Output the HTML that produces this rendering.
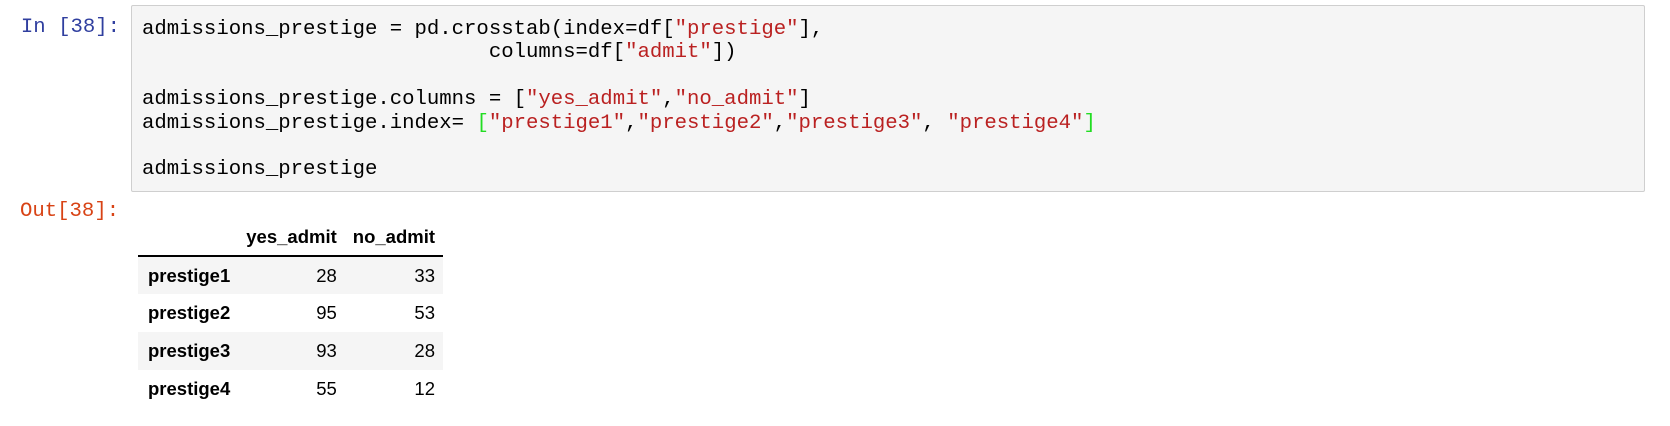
<!DOCTYPE html>
<html><head><style>
body{margin:0;width:1670px;height:426px;background:#fff;position:relative;overflow:hidden}
.p{position:absolute;font-family:"Liberation Mono",monospace;font-size:20.65px}
.in{color:#303f9f;right:1550px;top:16px}
.out{color:#d84315;left:20px;top:200px}
.box{position:absolute;left:131px;top:5px;width:1514px;height:187px;background:#f5f5f5;border:1px solid #cfcfcf;border-radius:2px;box-sizing:border-box}
pre{margin:0;position:absolute;left:10px;top:12px;font-family:"Liberation Mono",monospace;font-size:20.65px;line-height:23.4px;color:#000}
.s{color:#ba2121}.g{color:#22dd22}
table{position:absolute;left:138px;top:218px;border-collapse:collapse;font-family:"Liberation Sans",sans-serif;font-size:18.5px;color:#000}
th,td{padding:0 8px;text-align:right;height:38px;box-sizing:border-box}
thead th{height:38px;border-bottom:2px solid #000;vertical-align:middle}
tbody th{text-align:left;font-weight:bold;padding-left:10px}
tbody tr:nth-child(odd){background:#f5f5f5}
</style></head><body>
<div class="p in">In [38]:</div>
<div class="box"><pre>admissions_prestige = pd.crosstab(index=df[<span class="s">"prestige"</span>],
                            columns=df[<span class="s">"admit"</span>])

admissions_prestige.columns = [<span class="s">"yes_admit"</span>,<span class="s">"no_admit"</span>]
admissions_prestige.index= <span class="g">[</span><span class="s">"prestige1"</span>,<span class="s">"prestige2"</span>,<span class="s">"prestige3"</span>, <span class="s">"prestige4"</span><span class="g">]</span>

admissions_prestige</pre></div>
<div class="p out">Out[38]:</div>
<table>
<thead><tr><th style="width:97px"></th><th style="width:104px">yes_admit</th><th style="width:92px">no_admit</th></tr></thead>
<tbody>
<tr><th>prestige1</th><td>28</td><td>33</td></tr>
<tr><th>prestige2</th><td>95</td><td>53</td></tr>
<tr><th>prestige3</th><td>93</td><td>28</td></tr>
<tr><th>prestige4</th><td>55</td><td>12</td></tr>
</tbody></table>
</body></html>
